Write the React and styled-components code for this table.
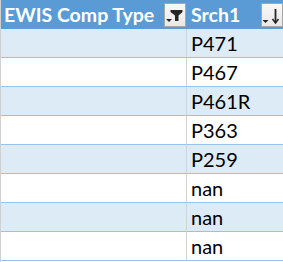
import React from "react";
import styled, { createGlobalStyle } from "styled-components";

const Global = createGlobalStyle`
  html, body { margin: 0; padding: 0; background: #ffffff; }
  body { font-family: "Lato", "Open Sans", "Liberation Sans", sans-serif; }
`;

const Sheet = styled.div`
  width: 283px;
  height: 262px;
  overflow: hidden;
  border-left: 1px solid #d0d0d0;
  box-sizing: border-box;
  display: grid;
  grid-template-columns: 186px 1fr;
  grid-auto-rows: 29px;
`;

const HeadCell = styled.div`
  background: #5b9bd5;
  color: #ffffff;
  font-weight: 700;
  font-size: 19.5px;
  display: flex;
  align-items: center;
  justify-content: space-between;
  padding: 0 0 0 ${(p) => p.$pl}px;
  box-sizing: border-box;
`;

const HeadLabel = styled.span`
  white-space: nowrap;
  line-height: 1;
`;

const FilterButton = styled.div`
  width: 22px;
  height: 24px;
  box-sizing: border-box;
  border: 1px solid #a6a6a6;
  background: linear-gradient(#f9f9f9, #e8e8e8);
  margin-right: ${(p) => p.$mr}px;
  display: flex;
  align-items: center;
  justify-content: center;
  flex: none;
`;

const Cell = styled.div`
  background: ${(p) => (p.$band ? "#ddebf7" : "#ffffff")};
  border-bottom: 1px solid #9bc2e6;
  border-right: ${(p) => (p.$divider ? "1px solid #d4d4d4" : "none")};
  box-sizing: border-box;
  font-family: "Lato", "Open Sans", "Liberation Sans", sans-serif;
  font-size: 20px;
  line-height: 1;
  color: #000000;
  display: flex;
  align-items: flex-end;
  padding: 0 0 4px 4px;
`;

const FunnelIcon = () => (
  <svg width="20" height="22" viewBox="0 0 20 22">
    <path d="M5.5 6h12v2l-4 3.5v5.5h-3.5v-5.5L5.5 8z" fill="#262626" />
    <path d="M1 15h6l-3 3z" fill="#262626" />
  </svg>
);

const SortIcon = () => (
  <svg width="20" height="22" viewBox="0 0 20 22">
    <path d="M0.5 16h6l-3 3z" fill="#262626" />
    <rect x="12.6" y="5" width="1.8" height="13" fill="#262626" />
    <path d="M10.5 15l3 4 3-4" fill="none" stroke="#262626" strokeWidth="1.5" />
  </svg>
);

const rows = ["P471", "P467", "P461R", "P363", "P259", "nan", "nan", "nan"];

export default function App() {
  return (
    <>
      <Global />
      <Sheet>
        <HeadCell $pl={3}>
          <HeadLabel>EWIS Comp Type</HeadLabel>
          <FilterButton $mr={1}>
            <FunnelIcon />
          </FilterButton>
        </HeadCell>
        <HeadCell $pl={4}>
          <HeadLabel>Srch1</HeadLabel>
          <FilterButton $mr={0}>
            <SortIcon />
          </FilterButton>
        </HeadCell>
        {rows.map((v, i) => (
          <React.Fragment key={i}>
            <Cell $band={i % 2 === 0} $divider />
            <Cell $band={i % 2 === 0}>{v}</Cell>
          </React.Fragment>
        ))}
      </Sheet>
    </>
  );
}
